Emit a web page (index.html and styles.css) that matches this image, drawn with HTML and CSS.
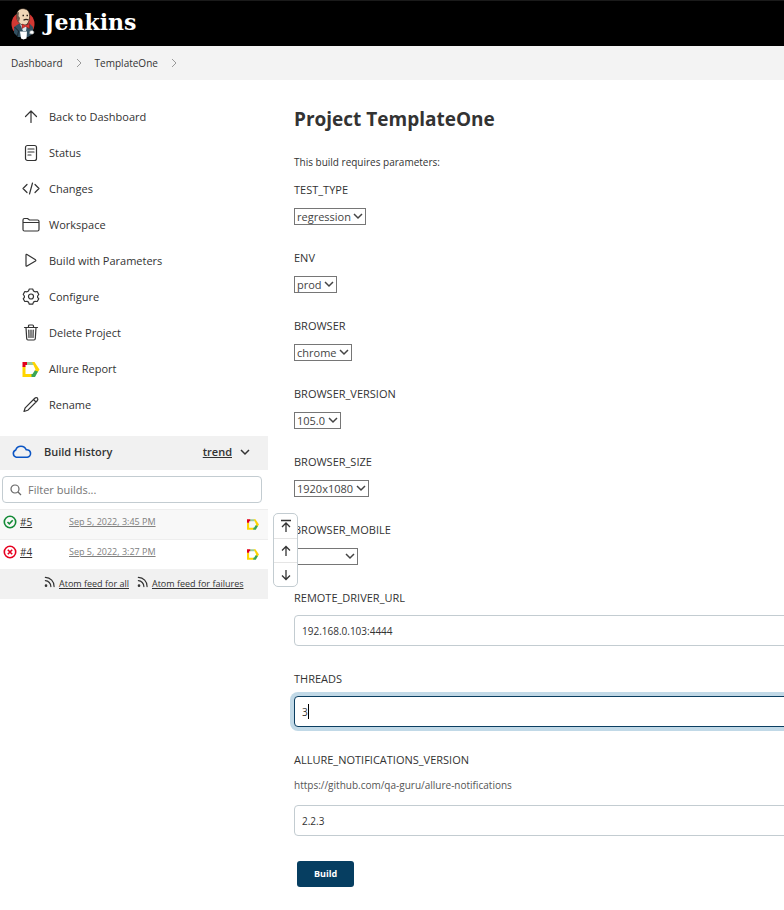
FILE: index.html
```html
<!DOCTYPE html>
<html lang="en">
<head>
<meta charset="utf-8">
<meta name="viewport" content="width=device-width, initial-scale=1">
<title>TemplateOne [Jenkins]</title>
<link rel="stylesheet" href="styles.css">
</head>
<body>
<svg class="sprite" aria-hidden="true">
  <symbol id="allure" viewBox="0 0 17 15">
    <path d="M4 0H10L11.500 3H4Z" fill="#97cc9e"/>
    <path d="M9.500 0H12L17 7.500 15 10.500 12 9 13 7.500Z" fill="#ffd500"/>
    <path d="M12.300 8.500 15.500 9.500 12.500 15H8.500V12H10Z" fill="#3aa655"/>
    <path d="M0 4.500H3V12H9V15H0Z" fill="#ffd500"/>
    <path d="M0 0H4.500V3H3V5H0Z" fill="#e2001a"/>
  </symbol>
  <symbol id="chevron" viewBox="0 0 10 10"><path d="M1 3 5 7 9 3" fill="none" stroke="currentColor" stroke-width="1.500"/></symbol>
  <symbol id="feed" viewBox="0 0 12 12"><g fill="none" stroke="currentColor" stroke-width="1.300" stroke-linecap="round"><path d="M1.500 1A9.500 9.500 0 0 1 11 11M1.500 4.500A6.500 6.500 0 0 1 7.500 11"/><circle cx="2.200" cy="10" r=".8"/></g></symbol>
</svg>

<header class="topbar">
  <a class="brand" href="#">
    <svg class="butler" viewBox="0 0 26 34" aria-hidden="true">
      <ellipse cx="13" cy="17" rx="11.500" ry="12" fill="#d33833"/>
      <path d="M4 20 10 16 20 17 23 20 23 25 21 28 18 30 8 30 4 26Z" fill="#335061"/>
      <path d="M10 17 17 18 16 24 13 24Z" fill="#dfe6ea"/>
      <path d="M7 6C8 2 12 1 15 2 19 3 20 7 19.500 11 19 15 17.500 18 14.500 18 10 18 8 15 7 12Z" fill="#f0d6b7" stroke="#2b2118" stroke-width=".7"/>
      <path d="M7 6C6 9 7 13 9 15L10 11 8.500 9 9 5Z" fill="#6b5a4e"/>
      <path d="M12.500 8.500H14M16.500 8.500H18M13.500 13.300Q16 11.500 18.500 13" fill="none" stroke="#2b2118" stroke-width="1.300"/>
      <path d="M12 17 15.500 18.500 19.500 16.500V21.500L15.500 19.500 12 21.500Z" fill="#e0342f" stroke="#7a1712" stroke-width=".5"/>
      <path d="M10 24.500H17L16.500 31.500 13.500 32.500 11 31.500Z" fill="#fff"/>
      <path d="M20 24Q24 22.500 24 26 23 28 19.500 26.500Z" fill="#fff" stroke="#81868a" stroke-width=".6"/>
      <path d="M4.500 20 8.500 24 7.500 29" fill="none" stroke="#101820" stroke-width=".8"/>
    </svg>
    <span class="wordmark">Jenkins</span>
  </a>
</header>

<nav class="crumbs" aria-label="Breadcrumb">
  <a href="#">Dashboard</a>
  <svg viewBox="0 0 10 10"><path d="M3 1 7 5 3 9"/></svg>
  <a href="#">TemplateOne</a>
  <svg viewBox="0 0 10 10"><path d="M3 1 7 5 3 9"/></svg>
</nav>

<div class="page">
  <aside class="side">
    <nav class="tasks" aria-label="Project">
      <a href="#"><svg class="icon" viewBox="0 0 18 18"><path d="M9 14.500V3M3.500 8.500 9 3 14.500 8.500"/></svg>Back to Dashboard</a>
      <a href="#"><svg class="icon" viewBox="0 0 18 18"><rect x="3.500" y="1.500" width="11" height="15" rx="2"/><path d="M6 5H12M6 8H12M6 11H9"/></svg>Status</a>
      <a href="#"><svg class="icon" viewBox="0 0 18 18"><path d="M5 4.500 1 8.500 5 12.500M13 4.500 17 8.500 13 12.500M10.500 3 7.500 14"/></svg>Changes</a>
      <a href="#"><svg class="icon" viewBox="0 0 18 18"><path d="M1 6.500H17M1 13.500V4Q1 2.500 2.500 2.500H5.500L7.500 4H15.500Q17 4 17 5.500V13.500Q17 15 15.500 15H2.500Q1 15 1 13.500Z"/></svg>Workspace</a>
      <a href="#"><svg class="icon" viewBox="0 0 18 18"><path d="M4 3V13.500Q4 14.500 5 14L13.500 9Q14.200 8.500 13.500 7.800L5 2.500Q4 2 4 3Z"/></svg>Build with Parameters</a>
      <a href="#"><svg class="icon" viewBox="0 0 18 18"><circle cx="9" cy="8.500" r="2.500"/><path d="M7.300 1H10.700L11.500 3 13 3.800 15.200 3.500 16.800 6.500 15.600 8V9.300L16.800 10.800 15.200 13.500 13 13.300 11.500 14.100 10.700 16.200H7.300L6.500 14.100 5 13.300 2.800 13.500 1.200 10.800 2.400 9.300V8L1.200 6.500 2.800 3.500 5 3.800 6.500 3Z"/></svg>Configure</a>
      <a href="#"><svg class="icon" viewBox="0 0 18 18"><path d="M2.500 3.500H15.500M6.500 3.500V2Q6.500 1 7.500 1H10.500Q11.500 1 11.500 2V3.500M4 3.500 4.700 14.500Q4.800 16 6 16H12Q13.200 16 13.300 14.500L14 3.500M6.800 6 7 13.500M9 6V13.500M11.200 6 11 13.500"/></svg>Delete Project</a>
      <a href="#"><svg class="icon logo"><use href="#allure"/></svg>Allure Report</a>
      <a href="#"><svg class="icon" viewBox="0 0 18 18"><path d="M2 15.500 3.200 11.800 12.500 2.500Q14 1 15.500 2 16.500 3.500 15 5L5.700 14.300ZM11.500 3.500 14 6"/></svg>Rename</a>
    </nav>

    <section class="history">
      <div class="history-head">
        <svg class="cloud" viewBox="0 0 20 14"><path d="M5 12.500A3.700 3.700 0 0 1 4.500 5.500 5.400 5.400 0 0 1 14.500 5.300 3.600 3.600 0 0 1 15.500 12.500Z"/></svg>
        <h2>Build History</h2>
        <a href="#">trend</a>
        <svg class="chev"><use href="#chevron"/></svg>
      </div>
      <label class="filter">
        <svg viewBox="0 0 12 12"><circle cx="5" cy="5" r="4"/><path d="M8 8 11 11"/></svg>
        <input type="search" placeholder="Filter builds..." aria-label="Filter builds">
      </label>
      <table class="builds">
        <tr>
          <td class="num"><div><svg class="ok" viewBox="0 0 14 14"><circle cx="7" cy="7" r="5.700"/><path d="M4.500 7 6.300 8.800 9.700 5.300"/></svg><a href="#">#5</a></div></td>
          <td><a class="date" href="#">Sep 5, 2022, 3:45 PM</a></td>
          <td class="badge"><svg><use href="#allure"/></svg></td>
        </tr>
        <tr>
          <td class="num"><div><svg class="bad" viewBox="0 0 14 14"><circle cx="7" cy="7" r="5.700"/><path d="M4.800 4.800 9.200 9.200M9.200 4.800 4.800 9.200"/></svg><a href="#">#4</a></div></td>
          <td><a class="date" href="#">Sep 5, 2022, 3:27 PM</a></td>
          <td class="badge"><svg><use href="#allure"/></svg></td>
        </tr>
      </table>
      <div class="feeds">
        <svg><use href="#feed"/></svg><a href="#">Atom feed for all</a>
        <svg><use href="#feed"/></svg><a href="#">Atom feed for failures</a>
      </div>
      <div class="pager">
        <button type="button" aria-label="Newest builds"><svg viewBox="0 0 12 14"><path d="M1 1.500H11M6 13V4M2 8 6 4 10 8"/></svg></button>
        <button type="button" aria-label="Newer builds"><svg viewBox="0 0 12 14"><path d="M6 12V2.500M2 6.500 6 2.500 10 6.500"/></svg></button>
        <button type="button" aria-label="Older builds"><svg viewBox="0 0 12 14"><path d="M6 2V11.500M2 7.500 6 11.500 10 7.500"/></svg></button>
      </div>
    </section>
  </aside>

  <main class="main">
    <h1>Project TemplateOne</h1>
    <p class="intro">This build requires parameters:</p>
    <form>
      <div class="field"><label for="type">TEST_TYPE</label>
        <div class="pick"><select id="type"><option>regression</option></select><svg><use href="#chevron"/></svg></div></div>
      <div class="field"><label for="env">ENV</label>
        <div class="pick"><select id="env"><option>prod</option></select><svg><use href="#chevron"/></svg></div></div>
      <div class="field"><label for="browser">BROWSER</label>
        <div class="pick"><select id="browser"><option>chrome</option></select><svg><use href="#chevron"/></svg></div></div>
      <div class="field"><label for="version">BROWSER_VERSION</label>
        <div class="pick"><select id="version"><option>105.0</option></select><svg><use href="#chevron"/></svg></div></div>
      <div class="field"><label for="size">BROWSER_SIZE</label>
        <div class="pick"><select id="size"><option>1920x1080</option></select><svg><use href="#chevron"/></svg></div></div>
      <div class="field"><label for="mobile">BROWSER_MOBILE</label>
        <div class="pick blank"><select id="mobile"><option></option></select><svg><use href="#chevron"/></svg></div></div>
      <div class="field"><label for="url">REMOTE_DRIVER_URL</label>
        <input class="text" id="url" type="text" value="192.168.0.103:4444"></div>
      <div class="field"><label for="threads">THREADS</label>
        <div class="active"><input class="text" id="threads" type="text" value="3"></div></div>
      <div class="field"><label for="allure-version">ALLURE_NOTIFICATIONS_VERSION</label>
        <p class="help">https://github.com/qa-guru/allure-notifications</p>
        <input class="text" id="allure-version" type="text" value="2.2.3"></div>
      <button class="build" type="button">Build</button>
    </form>
  </main>
</div>
</body>
</html>
```
FILE: styles.css
```css
* { box-sizing: border-box; }
body {
  margin: 0;
  overflow-x: hidden;
  background: #fff;
  color: #333;
  font-family: "Open Sans", "Noto Sans", sans-serif;
  font-size: 11px;
  line-height: 16px;
}
a { color: inherit; }
svg { flex: none; }
h1, h2, p { margin: 0; }
input, select, button { font: inherit; color: inherit; }
.sprite { position: absolute; width: 0; height: 0; }

.topbar { height: 46px; background: #000; border-top: 1px solid #1a1a1a; padding: 0 10px; display: flex; align-items: center; }
.brand { display: flex; align-items: center; gap: 8px; color: #fff; text-decoration: none; }
.butler { width: 26px; height: 34px; }
.wordmark { padding-bottom: 3px; font: bold 22px/30px "DejaVu Serif", serif; }

.crumbs { height: 34px; padding: 0 11px; background: #f3f3f3; display: flex; align-items: center; gap: 11px; font-size: 10px; }
.crumbs a { text-decoration: none; }
.crumbs svg { width: 10px; height: 10px; fill: none; stroke: #999; }

.page { display: flex; align-items: flex-start; }
.side { flex: 0 0 268px; padding-top: 19px; }
.tasks { display: flex; flex-direction: column; }
.tasks a { display: flex; align-items: center; gap: 9px; height: 36px; padding-left: 22px; font-size: 11px; text-decoration: none; }
.icon { width: 18px; height: 18px; fill: none; stroke: #333; stroke-width: 1.2; stroke-linecap: round; stroke-linejoin: round; }
.logo { height: 15px; stroke: none; }

.history { position: relative; margin-top: 13px; }
.history-head { height: 34px; padding: 0 18px 3px 11px; background: #f1f1f1; display: flex; align-items: center; gap: 8px; font-size: 11px; font-weight: 600; }
.history-head h2 { flex: 1; margin-left: 4px; font-size: 11px; font-weight: 600; }
.cloud { width: 21px; height: 15px; fill: none; stroke: #0b55c4; stroke-width: 1.5; }
.chev { width: 10px; height: 10px; }
.filter { display: flex; align-items: center; gap: 6px; height: 27px; margin: 6px; margin-left: 2px; padding: 0 7px; border: 1px solid #c3ccd1; border-radius: 4px; background: #fff; }
.filter svg { width: 12px; height: 12px; fill: none; stroke: #666; stroke-width: 1.2; }
.filter input { flex: 1; min-width: 0; padding: 0; border: 0; outline: 0; background: none; }
.filter input::placeholder { color: #757575; opacity: 1; }
.builds { width: 100%; border-spacing: 0; font-size: 9px; }
.builds tr { height: 30px; }
.builds tr:first-child { background: #f8f8f8; }
.builds td { padding: 0 0 5px; border-top: 1px solid #eee; vertical-align: middle; }
.builds .num { width: 69px; padding-left: 3px; }
.num div { display: flex; align-items: center; gap: 3px; font-size: 10px; }
.num svg { width: 14px; height: 14px; fill: none; stroke-width: 1.6; }
.ok { stroke: #138a36; }
.bad { stroke: #e6001f; }
.date { color: #808080; }
.builds .badge { width: 21px; padding: 0; }
.badge svg { display: block; width: 12px; height: 11px; }
.feeds { display: flex; align-items: center; gap: 4px; height: 30px; padding-left: 44px; background: #f1f1f1; font-size: 9px; white-space: nowrap; }
.feeds svg { width: 11px; height: 12px; margin-bottom: 4px; }
.feeds a + svg { margin-left: 4px; }
.pager { position: absolute; left: 273px; bottom: 12px; width: 25px; border: 1px solid #c3ccd1; border-radius: 5px; background: #fff; }
.pager button { display: flex; align-items: center; justify-content: center; width: 100%; height: 24px; padding: 0; border: 0; background: none; }
.pager button + button { border-top: 1px solid #e5e5e5; }
.pager svg { width: 12px; height: 14px; fill: none; stroke: #333; stroke-width: 1.3; }

.main { flex: 1; min-width: 0; margin-right: -8px; padding: 25px 0 24px 26px; }
h1 { font-size: 19px; line-height: 28px; font-weight: 700; }
.intro { margin: 21px 0 12px; font-size: 10px; }
.field { display: flex; flex-direction: column; align-items: flex-start; margin-bottom: 25px; }
.field > label { margin-bottom: 9px; }
.pick { display: grid; align-items: end; justify-items: end; height: 18px; color: #444; }
.pick > * { grid-area: 1 / 1; }
.pick select { appearance: none; height: 17px; padding: 0 14px 0 2px; border: 1px solid #767676; border-radius: 0; background: #fff; line-height: 15px; }
.pick svg { width: 10px; height: 10px; margin: 0 3px 4px 0; pointer-events: none; }
.blank select { width: 64px; }
.text { display: block; width: 100%; height: 31px; padding: 0 7px; border: 1px solid #c3ccd1; border-radius: 4px; background: #fff; outline: 0; font-size: 10px; }
.active { position: relative; width: 100%; }
.active .text { border-color: #0b3e61; box-shadow: 0 0 0 4px #c1d9e7; }
.active::after { content: ""; position: absolute; left: 14px; top: 8px; width: 1px; height: 15px; background: #000; }
.help { margin-bottom: 12px; color: #555; font-size: 10px; }
.build { display: block; margin-left: 3px; width: 57px; height: 26px; padding: 0; border: 0; border-radius: 3px; background: #063e61; color: #fff; font-size: 9px; font-weight: 700; }
```
